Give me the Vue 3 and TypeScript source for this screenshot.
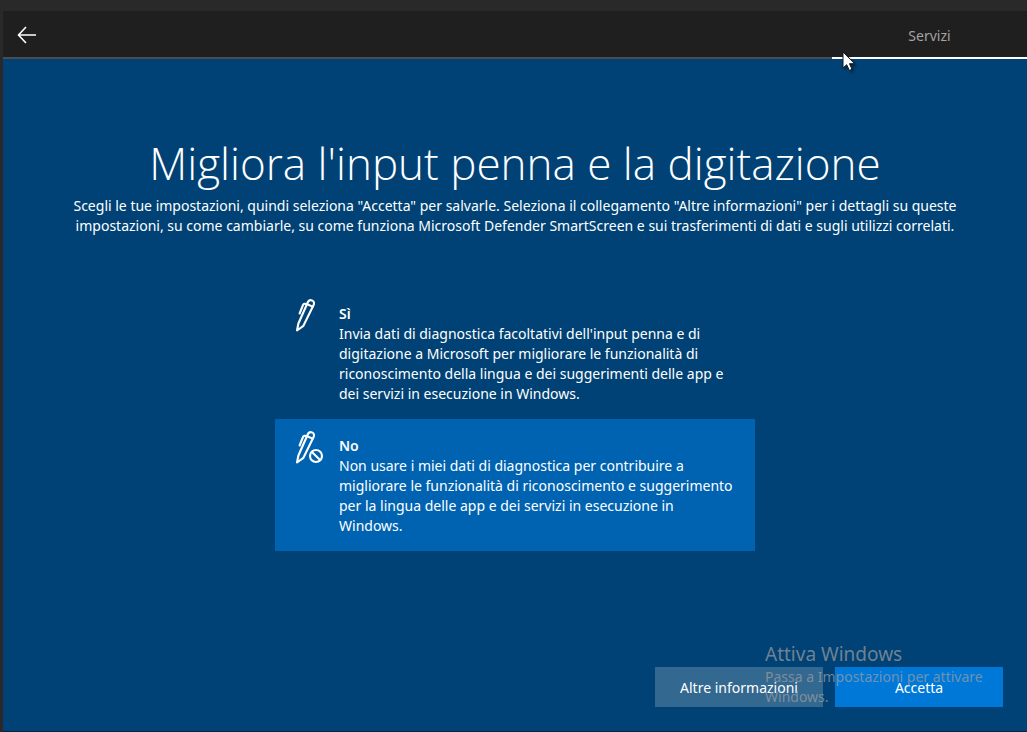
<script setup lang="ts">
import { ref } from 'vue'

interface Choice {
  id: string
  title: string
  lines: string[]
  blocked: boolean
}

const intro: string[] = [
  'Scegli le tue impostazioni, quindi seleziona "Accetta" per salvarle. Seleziona il collegamento "Altre informazioni" per i dettagli su queste',
  'impostazioni, su come cambiarle, su come funziona Microsoft Defender SmartScreen e sui trasferimenti di dati e sugli utilizzi correlati.',
]

const choices: Choice[] = [
  {
    id: 'yes',
    title: 'Sì',
    lines: [
      "Invia dati di diagnostica facoltativi dell'input penna e di",
      'digitazione a Microsoft per migliorare le funzionalità di',
      'riconoscimento della lingua e dei suggerimenti delle app e',
      'dei servizi in esecuzione in Windows.',
    ],
    blocked: false,
  },
  {
    id: 'no',
    title: 'No',
    lines: [
      'Non usare i miei dati di diagnostica per contribuire a',
      'migliorare le funzionalità di riconoscimento e suggerimento',
      'per la lingua delle app e dei servizi in esecuzione in',
      'Windows.',
    ],
    blocked: true,
  },
]

const selected = ref<string>('no')
</script>

<template>
  <div class="frame">
    <div class="window">
      <header class="topbar">
        <button class="back" type="button" aria-label="Indietro">
          <svg width="20" height="18" viewBox="0 0 20 18" fill="none" stroke="#fff" stroke-width="1.6">
            <path d="M9 1 1.5 9 9 17M1.5 9H19" />
          </svg>
        </button>
        <nav class="steps">
          <span class="step">Servizi</span>
        </nav>
      </header>

      <main class="content">
        <h1>Migliora l'input penna e la digitazione</h1>
        <p class="intro">
          <span v-for="line in intro" :key="line" class="line">{{ line }}</span>
        </p>

        <div class="choices" role="radiogroup" aria-label="Input penna e digitazione">
          <label
            v-for="choice in choices"
            :key="choice.id"
            class="choice"
            :class="{ selected: selected === choice.id }"
          >
            <input v-model="selected" class="radio" type="radio" name="inking" :value="choice.id" />
            <svg class="icon" width="32" height="36" viewBox="0 0 32 36" fill="none" stroke="#fff" stroke-width="2.1" stroke-linejoin="round" stroke-linecap="round">
              <path v-if="!choice.blocked" d="M4 33.5 5.4 26.5 14.5 6C15.3 3.6 17 2.8 19 3.4 21 4.2 21.5 6 20.6 8L10.4 28.8 4 33.5Z" />
              <path v-else d="M20.6 8 10.4 28.8 4 33.5 5.4 26.5 14.5 6C15.3 3.6 17 2.8 19 3.4 21 4.2 21.5 6 20.6 8Z" />
              <path d="M13.8 7.4 12 6.8C11 6.5 10.4 7 10 8L6.6 16.5M14.2 7.2 19.6 9.6" />
              <template v-if="choice.blocked">
                <circle cx="23" cy="27" r="6" />
                <path d="M18.9 22.9 27.1 31.1" />
              </template>
            </svg>
            <span class="text">
              <strong>{{ choice.title }}</strong>
              <span v-for="line in choice.lines" :key="line" class="line">{{ line }}</span>
            </span>
          </label>
        </div>
      </main>

      <footer class="actions">
        <button class="btn secondary" type="button">Altre informazioni</button>
        <button class="btn primary" type="button">Accetta</button>
      </footer>
    </div>

    <aside class="watermark">
      <div class="mark-title">Attiva Windows</div>
      <div>Passa a Impostazioni per attivare<br />Windows.</div>
    </aside>

    <svg class="pointer" width="16" height="22" viewBox="0 0 16 22">
      <path d="M1 1V17L4.7 13.7 7.3 19.4 10 18.2 7.5 12.7H12.6Z" fill="#fff" stroke="#101820" stroke-width="1" />
    </svg>
  </div>
</template>

<style>
body {
  margin: 0;
  background: #292929;
}
</style>

<style scoped>
.frame {
  position: relative;
  box-sizing: border-box;
  min-height: 100vh;
  display: flex;
  flex-direction: column;
  padding: 11px 0 0 3px;
  overflow: hidden;
  background: #292929;
  color: #fff;
  font-family: "Noto Sans", "Open Sans", sans-serif;
  font-size: 14px;
  line-height: 20px;
}

.window {
  flex: 1;
  display: flex;
  flex-direction: column;
  background: #004275;
  border-bottom: 1px solid #06243d;
}

.topbar {
  display: flex;
  justify-content: space-between;
  height: 48px;
  background: linear-gradient(#4c4c4c, #4c4c4c) bottom / 100% 2px no-repeat #1f1f1f;
}

.back {
  display: flex;
  align-items: center;
  width: 48px;
  padding: 0 0 0 14px;
  border: 0;
  background: none;
}

.steps {
  display: flex;
  width: 195px;
}

.step {
  flex: 1;
  box-sizing: border-box;
  border-bottom: 2px solid #fff;
  color: #a3a3a3;
  line-height: 50px;
  text-align: center;
}

.content {
  flex: 1;
  display: flex;
  flex-direction: column;
  align-items: center;
  padding-top: 72px;
}

h1 {
  margin: 0;
  font-family: "Open Sans", "Noto Sans", sans-serif;
  font-size: 44px;
  font-weight: 300;
  line-height: 64px;
  white-space: nowrap;
}

.intro {
  margin: 1px 0 0;
  text-align: center;
}

.line {
  display: block;
  white-space: nowrap;
}

.choices {
  width: 480px;
  margin-top: 51px;
}

.choice {
  display: flex;
  box-sizing: border-box;
  padding: 10px 16px 15px 18px;
}

.choice.selected {
  background: #0063b1;
}

.radio {
  appearance: none;
  width: 0;
  height: 0;
  margin: 0;
}

.icon {
  flex: none;
  margin-right: 14px;
}

.text {
  padding-top: 7px;
}

strong {
  display: block;
  font-weight: 600;
}

.actions {
  display: flex;
  justify-content: flex-end;
  gap: 12px;
  padding: 0 24px 24px;
}

.btn {
  width: 168px;
  height: 40px;
  padding: 2px 0 0;
  border: 0;
  color: #fff;
  font: inherit;
}

.secondary {
  background: #336891;
}

.primary {
  background: #0078d7;
}

.watermark {
  position: absolute;
  right: 22px;
  bottom: 25px;
  width: 240px;
  color: rgba(160, 160, 160, 0.7);
  white-space: nowrap;
  pointer-events: none;
}

.mark-title {
  font-size: 19px;
  line-height: 26px;
}

.pointer {
  position: absolute;
  top: 51px;
  right: 169px;
  filter: drop-shadow(2px 2px 1px rgba(0, 0, 0, 0.4));
  pointer-events: none;
}
</style>
